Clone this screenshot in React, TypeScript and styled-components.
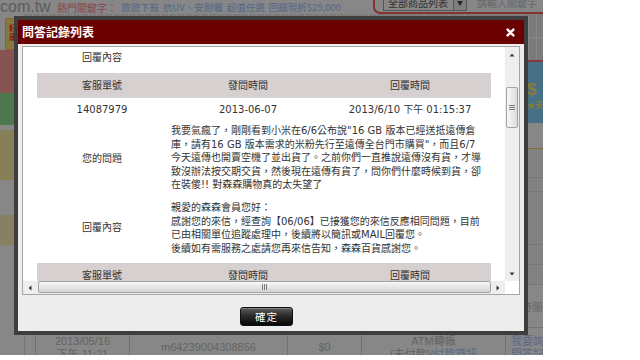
import React from 'react';
import styled, { createGlobalStyle } from 'styled-components';

const GlobalStyle = createGlobalStyle`
  html, body {
    margin: 0;
    padding: 0;
    background: #ffffff;
  }
  body {
    font-family: "DejaVu Sans", "Noto Sans CJK TC", sans-serif;
  }
  * {
    box-sizing: border-box;
  }
`;

const Screen = styled.div`
  position: relative;
  width: 640px;
  height: 360px;
  overflow: hidden;
  background: #ffffff;
`;

/* ---------- the shop page behind the modal ---------- */

const Page = styled.div`
  position: relative;
  width: 543px;
  height: 355px;
  overflow: hidden;
  background: #ffffff;
  display: flex;
  flex-direction: column;
  font-family: "Liberation Sans", "Noto Sans CJK TC", sans-serif;
`;

const TopBar = styled.div`
  height: 14px;
  flex-shrink: 0;
  display: flex;
  align-items: center;
  white-space: nowrap;
`;

const Logo = styled.span`
  flex: 0 0 51px;
  font-size: 16px;
  line-height: 14px;
  color: #aeaeae;
`;

const HotArea = styled.div`
  flex: 0 0 322px;
  display: flex;
  align-items: center;
  gap: 4px;
  padding-left: 6px;
  font-family: "Noto Sans CJK TC", sans-serif;
`;

const HotLabel = styled.span`
  font-size: 10px;
  color: #ff8a8a;
`;

const HotLink = styled.a`
  font-size: 9.5px;
  color: #9ec4ff;
  text-decoration: none;
`;

const SearchBox = styled.div`
  align-self: flex-end;
  flex-shrink: 0;
  height: 23px;
  display: flex;
  align-items: center;
  gap: 4px;
  padding-left: 8px;
  border: 2px solid #ff5c5c;
  border-radius: 7px;
  font-family: "Noto Sans CJK TC", sans-serif;
`;

const SelectBox = styled.div`
  width: 84px;
  height: 16px;
  display: flex;
  align-items: center;
  justify-content: space-between;
  border: 1px solid #a0a0a0;
  background: #ffffff;
  padding-left: 4px;
  font-size: 10px;
  color: #5a5a5a;
`;

const SelectArrow = styled.span`
  width: 13px;
  height: 100%;
  border-left: 1px solid #a0a0a0;
  background: #eeeeee;
  display: flex;
  align-items: center;
  justify-content: center;
  font-size: 6px;
  color: #444;
`;

const KeywordInput = styled.input`
  width: 90px;
  height: 16px;
  border: 0;
  padding: 0 0 0 6px;
  background: transparent;
  font: 10px "Noto Sans CJK TC", sans-serif;
  &::placeholder {
    color: #c2c2c2;
  }
`;

const PageBody = styled.div`
  flex: 1;
  min-height: 0;
  display: flex;
`;

const SideBar = styled.div`
  flex: 0 0 25px;
  display: flex;
  flex-direction: column;
  padding-top: 4px;
  border-right: 1px solid #dedede;
`;

const SideTag = styled.div`
  height: 32px;
  margin-left: 5px;
  border: 1px solid #ffc24a;
  background: #ffe27a;
  color: #ff2f2f;
  font: 700 8px/9px "Noto Sans CJK TC", sans-serif;
  padding: 4px 0 0 3px;
`;

const SideBlock = styled.div<{ $h: number; $bg: string; $mt?: number }>`
  height: ${(p) => p.$h}px;
  margin-top: ${(p) => p.$mt ?? 0}px;
  background: ${(p) => p.$bg};
  flex-shrink: 0;
`;

const MainCol = styled.div`
  flex: 1;
  min-width: 0;
  display: flex;
  flex-direction: column;
`;

const NavGrid = styled.div`
  height: 46px;
  flex-shrink: 0;
  background-color: #e9e9e9;
  background-image: linear-gradient(
      to bottom,
      transparent 23px,
      #ffffff 23px,
      #ffffff 24px,
      transparent 24px
    ),
    repeating-linear-gradient(to right, transparent 0 7px, #ffffff 7px 8px);
`;

const Rule = styled.div<{ $h: number; $color: string }>`
  height: ${(p) => p.$h}px;
  flex-shrink: 0;
  background: ${(p) => p.$color};
`;

const Banner = styled.div`
  height: 61px;
  flex-shrink: 0;
  background: #86d4ff;
  display: flex;
  justify-content: flex-end;
`;

const BannerDeco = styled.div`
  width: 16px;
  padding-top: 18px;
  display: flex;
  flex-direction: column;
  color: #ffec5e;
  white-space: nowrap;
`;

const Coin = styled.span`
  font: 700 17px/20px "Liberation Sans", sans-serif;
`;

const Ribbon = styled.span`
  font: 700 8px/10px "Noto Sans CJK TC", sans-serif;
`;

const Spacer = styled.div<{ $h: number }>`
  height: ${(p) => p.$h}px;
  flex-shrink: 0;
`;

const ListRow = styled.div<{ $h: number }>`
  height: ${(p) => p.$h}px;
  flex-shrink: 0;
  background: #f6f6f6;
  border-bottom: 1px solid #e0e0e0;
`;

const OrderGrid = styled.div<{ $h: number }>`
  height: ${(p) => p.$h}px;
  flex-shrink: 0;
  margin-left: 10px;
  display: grid;
  grid-template-columns: 94px 158px 74px 144px 90px;
  border-bottom: 1px solid #dcdcdc;
`;

const OrderCell = styled.div<{ $start?: boolean }>`
  border-left: 1px solid #d6d6d6;
  display: flex;
  flex-direction: column;
  align-items: ${(p) => (p.$start ? 'flex-start' : 'center')};
  justify-content: center;
  padding-left: ${(p) => (p.$start ? 5 : 0)}px;
  font-size: 11px;
  line-height: 13px;
  color: #bdbdbd;
  white-space: nowrap;
  overflow: hidden;
`;

const HeadLabel = styled.span`
  font: 10.5px "Noto Sans CJK TC", sans-serif;
  color: #c4c4c4;
`;

const PageLink = styled.a`
  color: #b0c8ff;
  text-decoration: none;
`;

const Dim = styled.div`
  position: absolute;
  inset: 0;
  background: rgba(0, 0, 0, 0.47);
`;

/* ---------- the modal ---------- */

const Dialog = styled.div`
  position: absolute;
  left: 14px;
  top: 16px;
  width: 514px;
  height: 319px;
  padding: 4px;
  background: #3e3e3e;
  display: flex;
  flex-direction: column;
  font-family: "DejaVu Sans", "Noto Sans CJK TC", sans-serif;
`;

const TitleBar = styled.div`
  height: 24px;
  flex-shrink: 0;
  background: #6a0000;
  display: flex;
  align-items: center;
  justify-content: space-between;
  padding: 0 9px 0 4px;
`;

const Title = styled.h1`
  margin: 0;
  font: 700 12px/1 "Noto Sans CJK TC", sans-serif;
  color: #ffffff;
`;

const CloseButton = styled.button`
  width: 9px;
  height: 9px;
  padding: 0;
  border: 0;
  background: transparent;
  display: flex;
  cursor: pointer;
`;

const DialogBody = styled.div`
  flex: 1;
  min-height: 0;
  background: #ededed;
  display: flex;
  flex-direction: column;
  padding: 2px 4px 0;
`;

const ScrollBox = styled.div`
  height: 249px;
  flex-shrink: 0;
  border: 1px solid #a5a5a5;
  background: #ffffff;
  display: grid;
  grid-template-columns: minmax(0, 1fr) 14px;
  grid-template-rows: minmax(0, 1fr) 13px;
`;

const Viewport = styled.div`
  overflow: hidden;
  padding: 0 14px;
  display: flex;
  flex-direction: column;
  gap: 5px;
`;

const RecordTable = styled.div`
  flex-shrink: 0;
  display: grid;
  grid-template-columns: 130px 162px 162px;
  font-size: 10px;
  line-height: 13.4px;
  color: #333333;
`;

const HeadCell = styled.div`
  height: 25px;
  background: #d7d0d1;
  display: flex;
  align-items: center;
  justify-content: center;
`;

const DataCell = styled.div`
  height: 22px;
  display: flex;
  align-items: center;
  justify-content: center;
  white-space: nowrap;
`;

const LabelCell = styled.div`
  padding: 4px 0;
  display: flex;
  align-items: center;
  justify-content: center;
`;

const TextCell = styled.div<{ $pt?: number; $pb?: number }>`
  grid-column: span 2;
  padding: ${(p) => p.$pt ?? 4}px 4px ${(p) => p.$pb ?? 4}px;
  white-space: nowrap;
`;

const Line = styled.div``;

const VBar = styled.div`
  background: #eeeeee;
  display: flex;
  flex-direction: column;
`;

const HBar = styled.div`
  background: #eeeeee;
  display: flex;
`;

const ArrowBox = styled.div<{ $w: number; $h: number }>`
  flex: 0 0 auto;
  width: ${(p) => p.$w}px;
  height: ${(p) => p.$h}px;
  display: flex;
  align-items: center;
  justify-content: center;
`;

const Track = styled.div<{ $row?: boolean }>`
  flex: 1;
  min-width: 0;
  min-height: 0;
  display: flex;
  flex-direction: ${(p) => (p.$row ? 'row' : 'column')};
`;

const VThumb = styled.div<{ $offset: number; $len: number }>`
  margin: ${(p) => p.$offset}px 1px 0;
  height: ${(p) => p.$len}px;
  border: 1px solid #a3a3a3;
  border-radius: 2px;
  background: linear-gradient(to right, #f8f8f8, #dcdcdc);
  display: flex;
  align-items: center;
  justify-content: center;
`;

const HThumb = styled.div<{ $offset: number; $len: number }>`
  margin: 0 0 0 ${(p) => p.$offset}px;
  width: ${(p) => p.$len}px;
  height: 12px;
  border: 1px solid #a3a3a3;
  border-radius: 2px;
  background: linear-gradient(to bottom, #f8f8f8, #d4d4d4);
  display: flex;
  align-items: center;
  justify-content: center;
`;

const Corner = styled.div`
  background: #ffffff;
`;

const Footer = styled.div`
  flex: 1;
  display: flex;
  justify-content: center;
  align-items: flex-start;
  padding: 12px 9px 0 0;
`;

const OkButton = styled.button`
  width: 53px;
  height: 19px;
  padding: 0;
  border: 1px solid #101010;
  border-radius: 3px;
  background: linear-gradient(to bottom, #5c5c5c 0%, #2c2c2c 45%, #060606 100%);
  box-shadow: inset 0 1px 0 rgba(255, 255, 255, 0.22);
  color: #ffffff;
  font: 10.5px/17px "Noto Sans CJK TC", sans-serif;
  letter-spacing: 1px;
  cursor: pointer;
`;

type Dir = 'up' | 'down' | 'left' | 'right';

const arrowPoints: Record<Dir, string> = {
  up: '0.5,4.5 3,1.5 5.5,4.5',
  down: '0.5,1.5 3,4.5 5.5,1.5',
  left: '4.5,0.5 1.5,3 4.5,5.5',
  right: '1.5,0.5 4.5,3 1.5,5.5',
};

const Arrow = ({ dir }: { dir: Dir }) => (
  <svg width="6" height="6" viewBox="0 0 6 6">
    <polygon points={arrowPoints[dir]} fill="#3a3a3a" />
  </svg>
);

const Grip = ({ vertical }: { vertical?: boolean }) =>
  vertical ? (
    <svg width="6" height="5" viewBox="0 0 6 5">
      <path d="M0 0.5H6M0 2.5H6M0 4.5H6" stroke="#7a7a7a" strokeWidth="1" />
    </svg>
  ) : (
    <svg width="5" height="6" viewBox="0 0 5 6">
      <path d="M0.5 0V6M2.5 0V6M4.5 0V6" stroke="#7a7a7a" strokeWidth="1" />
    </svg>
  );

const hotWords = ['旅遊下殺', '抗UV、安耐曬', '超值任選', '回饋現折$25,000'];

const question = [
  '我要氣瘋了，剛剛看到小米在6/6公布說"16 GB 版本已經送抵遠傳倉',
  '庫，請有16 GB 版本需求的米粉先行至遠傳全台門市購買"，而且6/7',
  '今天遠傳也開賣空機了並出貨了。之前你們一直推說遠傳沒有貨，才導',
  '致沒辦法按交期交貨，然後現在遠傳有貨了，問你們什麼時候到貨，卻',
  '在裝傻!! 對森森購物真的太失望了',
];

const reply = [
  '親愛的森森會員您好：',
  '感謝您的來信，經查詢【06/06】已接獲您的來信反應相同問題，目前',
  '已由相關單位追蹤處理中，後續將以簡訊或MAIL回覆您。',
  '後續如有需服務之處請您再來信告知，森森百貨感謝您。',
];

const headers = ['客服單號', '發問時間', '回覆時間'];

const BackPage = () => (
  <Page>
    <TopBar>
      <Logo>com.tw</Logo>
      <HotArea>
        <HotLabel>熱門關鍵字：</HotLabel>
        {hotWords.map((w) => (
          <HotLink key={w}>{w}</HotLink>
        ))}
      </HotArea>
      <SearchBox>
        <SelectBox>
          <span>全部商品列表</span>
          <SelectArrow>▼</SelectArrow>
        </SelectBox>
        <KeywordInput placeholder="請輸入關鍵字" readOnly />
      </SearchBox>
    </TopBar>
    <PageBody>
      <SideBar>
        <SideTag>
          好<br />康
        </SideTag>
        <SideBlock $h={43} $bg="#ff9c9c" />
        <SideBlock $h={32} $bg="#92e292" />
        <SideBlock $h={50} $bg="#fff0a6" $mt={5} />
        <SideBlock $h={30} $bg="#fff2b8" $mt={35} />
      </SideBar>
      <MainCol>
        <NavGrid />
        <Rule $h={2} $color="#ff6e6e" />
        <Banner>
          <BannerDeco>
            <Coin>$</Coin>
            <Ribbon>★天天</Ribbon>
          </BannerDeco>
        </Banner>
        <Spacer $h={25} />
        <Rule $h={1} $color="#ffc05a" />
        {[29, 14, 53, 20, 20].map((h, i) => (
          <ListRow key={i} $h={h} />
        ))}
        <OrderGrid $h={43}>
          <OrderCell />
          <OrderCell />
          <OrderCell />
          <OrderCell />
          <OrderCell $start>
            <HeadLabel>即時服務</HeadLabel>
          </OrderCell>
        </OrderGrid>
        <OrderGrid $h={40}>
          <OrderCell>
            <span>2013/05/16</span>
            <span>下午 11:21</span>
          </OrderCell>
          <OrderCell>m64239004308856</OrderCell>
          <OrderCell>$0</OrderCell>
          <OrderCell>
            <span>ATM轉帳</span>
            <span>
              (未付款)/<PageLink>付款資訊</PageLink>
            </span>
          </OrderCell>
          <OrderCell $start>
            <PageLink>我要詢問</PageLink>
            <PageLink>問答記錄</PageLink>
          </OrderCell>
        </OrderGrid>
      </MainCol>
    </PageBody>
    <Dim />
  </Page>
);

const QaDialog = () => (
  <Dialog role="dialog" aria-label="問答記錄列表">
    <TitleBar>
      <Title>問答記錄列表</Title>
      <CloseButton aria-label="close">
        <svg width="9" height="9" viewBox="0 0 9 9">
          <path
            d="M1.6 1.6L7.4 7.4M7.4 1.6L1.6 7.4"
            stroke="#ffffff"
            strokeWidth="2.4"
            strokeLinecap="round"
          />
        </svg>
      </CloseButton>
    </TitleBar>
    <DialogBody>
      <ScrollBox>
        <Viewport>
          <RecordTable>
            <LabelCell>回覆內容</LabelCell>
            <TextCell />
          </RecordTable>
          <RecordTable>
            {headers.map((h) => (
              <HeadCell key={h}>{h}</HeadCell>
            ))}
            <DataCell>14087979</DataCell>
            <DataCell>2013-06-07</DataCell>
            <DataCell>2013/6/10 下午 01:15:37</DataCell>
            <LabelCell>您的問題</LabelCell>
            <TextCell $pt={4} $pb={5}>
              {question.map((l) => (
                <Line key={l}>{l}</Line>
              ))}
            </TextCell>
            <LabelCell>回覆內容</LabelCell>
            <TextCell $pt={5} $pb={3}>
              {reply.map((l) => (
                <Line key={l}>{l}</Line>
              ))}
            </TextCell>
          </RecordTable>
          <RecordTable>
            {headers.map((h) => (
              <HeadCell key={h}>{h}</HeadCell>
            ))}
          </RecordTable>
        </Viewport>
        <VBar>
          <ArrowBox $w={14} $h={15}>
            <Arrow dir="up" />
          </ArrowBox>
          <Track>
            <VThumb $offset={25} $len={41}>
              <Grip vertical />
            </VThumb>
          </Track>
          <ArrowBox $w={14} $h={15}>
            <Arrow dir="down" />
          </ArrowBox>
        </VBar>
        <HBar>
          <ArrowBox $w={14} $h={13}>
            <Arrow dir="left" />
          </ArrowBox>
          <Track $row>
            <HThumb $offset={1} $len={453}>
              <Grip />
            </HThumb>
          </Track>
          <ArrowBox $w={14} $h={13}>
            <Arrow dir="right" />
          </ArrowBox>
        </HBar>
        <Corner />
      </ScrollBox>
      <Footer>
        <OkButton>確定</OkButton>
      </Footer>
    </DialogBody>
  </Dialog>
);

export default function App() {
  return (
    <>
      <GlobalStyle />
      <Screen>
        <BackPage />
        <QaDialog />
      </Screen>
    </>
  );
}
